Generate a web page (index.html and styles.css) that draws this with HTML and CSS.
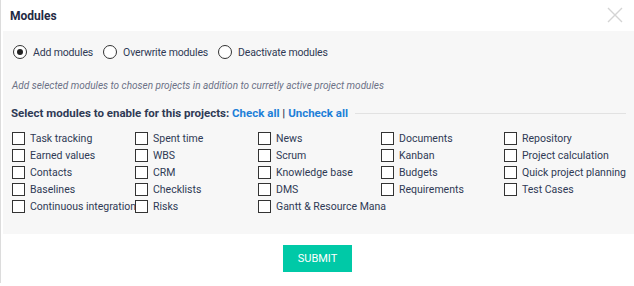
FILE: index.html
```html
<!DOCTYPE html>
<html lang="en">
<head>
  <meta charset="UTF-8" />
  <title>Modules</title>
  <link rel="stylesheet" href="styles.css">
</head>
<body>
  <div class="modal">
    <div class="modal-head">
      <h2>Modules</h2>
      <span class="close">
        <svg width="16" height="16" viewBox="0 0 16 16"><path d="M1 1 L15 15 M15 1 L1 15" stroke="#d4d4d4" stroke-width="1.4" fill="none"/></svg>
      </span>
    </div>

    <div class="panel">
      <div class="radios">
        <label class="radio"><span class="dot on"></span>Add modules</label>
        <label class="radio"><span class="dot"></span>Overwrite modules</label>
        <label class="radio"><span class="dot"></span>Deactivate modules</label>
      </div>
      <p class="hint">Add selected modules to chosen projects in addition to curretly active project modules</p>

      <div class="legend">
        <span>Select modules to enable for this projects: <a href="#">Check all</a> | <a href="#">Uncheck all</a></span>
        <span class="rule"></span>
      </div>

      <div class="grid">
        <label class="check"><span class="box"></span>Task tracking</label>
        <label class="check"><span class="box"></span>Spent time</label>
        <label class="check"><span class="box"></span>News</label>
        <label class="check"><span class="box"></span>Documents</label>
        <label class="check"><span class="box"></span>Repository</label>

        <label class="check"><span class="box"></span>Earned values</label>
        <label class="check"><span class="box"></span>WBS</label>
        <label class="check"><span class="box"></span>Scrum</label>
        <label class="check"><span class="box"></span>Kanban</label>
        <label class="check"><span class="box"></span>Project calculation</label>

        <label class="check"><span class="box"></span>Contacts</label>
        <label class="check"><span class="box"></span>CRM</label>
        <label class="check"><span class="box"></span>Knowledge base</label>
        <label class="check"><span class="box"></span>Budgets</label>
        <label class="check"><span class="box"></span>Quick project planning</label>

        <label class="check"><span class="box"></span>Baselines</label>
        <label class="check"><span class="box"></span>Checklists</label>
        <label class="check"><span class="box"></span>DMS</label>
        <label class="check"><span class="box"></span>Requirements</label>
        <label class="check"><span class="box"></span>Test Cases</label>

        <label class="check"><span class="box"></span>Continuous integration</label>
        <label class="check"><span class="box"></span>Risks</label>
        <label class="check"><span class="box"></span>Gantt &amp; Resource Mana</label>
      </div>
    </div>

    <div class="actions">
      <button class="submit">SUBMIT</button>
    </div>
  </div>
</body>
</html>
```

FILE: styles.css
```css
body {
  margin: 0;
  background: #fff;
  font-family: Roboto, "Noto Sans", Arial, sans-serif;
  font-size: 10.5px;
  color: #2f3a55;
}
.modal {
  border-left: 1px solid #dcdcdc;
  height: 283px;
}
.modal-head {
  height: 31px;
  display: flex;
  align-items: center;
  justify-content: space-between;
  padding: 0 11px 0 9px;
}
.modal-head h2 {
  margin: 0;
  font-size: 12px;
  font-weight: bold;
  color: #1f2a44;
}
.close {
  display: flex;
  margin-top: -2px;
}
.panel {
  margin-left: 2px;
  background: #f7f7f7;
  padding: 12px 8px 10px 8px;
  height: 181px;
}
.radios {
  display: flex;
  gap: 10px;
  height: 18px;
  align-items: center;
  padding-left: 2px;
  letter-spacing: -0.15px;
}
.radio {
  display: flex;
  align-items: center;
  gap: 6px;
}
.dot {
  width: 12px;
  height: 12px;
  border: 1px solid #333;
  border-radius: 50%;
  background: #fff;
  position: relative;
}
.dot.on::after {
  content: "";
  position: absolute;
  left: 3px;
  top: 3px;
  width: 6px;
  height: 6px;
  border-radius: 50%;
  background: #222;
}
.hint {
  margin: 19px 0 0 1px;
  font-style: italic;
  color: #6b7186;
  font-size: 10px;
}
.legend {
  display: flex;
  align-items: center;
  gap: 7px;
  margin-top: 15px;
  font-size: 11.5px;
  font-weight: bold;
  color: #2f3a55;
}
.legend a {
  color: #1e7fd8;
  text-decoration: none;
}
.rule {
  flex: 1;
  border-top: 1px solid #e2e2e2;
  margin-right: 0;
}
.grid {
  display: grid;
  grid-template-columns: repeat(5, 123px);
  grid-auto-rows: 17px;
  margin-top: 10px;
  margin-left: 1px;
}
.check {
  display: flex;
  align-items: center;
  gap: 5px;
  white-space: nowrap;
}
.box {
  flex: none;
  width: 11px;
  height: 11px;
  border: 1px solid #333;
  background: #fff;
}
.actions {
  display: flex;
  justify-content: center;
  padding-top: 11px;
}
.submit {
  background: #00c9a7;
  color: #fff;
  border: none;
  width: 69px;
  height: 27px;
  font-family: Roboto, "Noto Sans", Arial, sans-serif;
  font-size: 11px;
  cursor: pointer;
}
```
